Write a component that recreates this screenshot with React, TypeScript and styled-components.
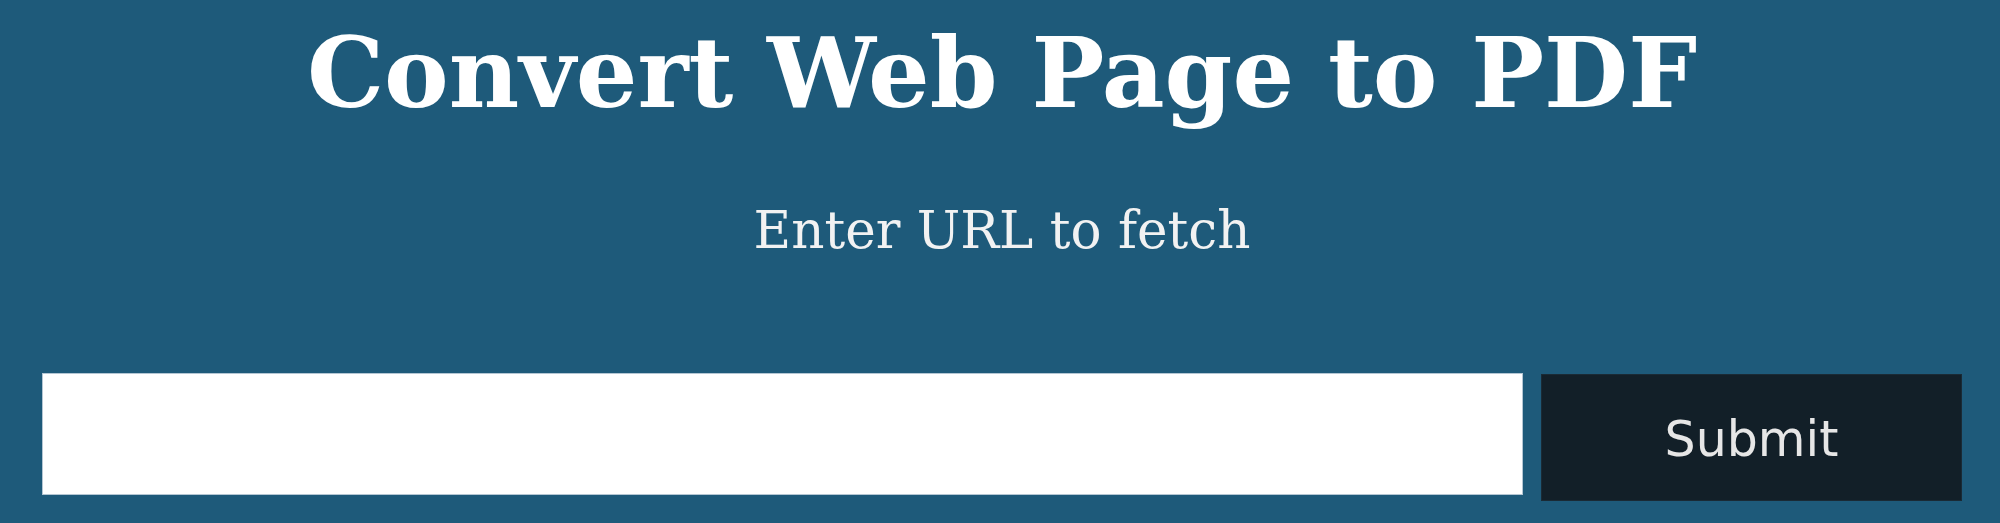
import React from "react";
import styled, { createGlobalStyle } from "styled-components";

const GlobalStyle = createGlobalStyle`
  html, body {
    margin: 0;
    padding: 0;
    background: #1e5a7a;
  }
  body {
    font-family: "DejaVu Serif", serif;
  }
`;

const Page = styled.main`
  display: flex;
  flex-direction: column;
  align-items: stretch;
  padding: 17px 38px 0 42px;
  min-height: 523px;
  box-sizing: border-box;
`;

const Title = styled.h1`
  margin: 0;
  text-align: center;
  font-family: "DejaVu Serif", serif;
  font-weight: bold;
  font-size: 97px;
  line-height: 113px;
  color: #ffffff;
`;

const Subtitle = styled.p`
  margin: 70px 0 0;
  text-align: center;
  font-family: "DejaVu Serif", serif;
  font-size: 51.6px;
  line-height: 60px;
  color: #f2f2f2;
`;

const Form = styled.form`
  display: flex;
  align-items: flex-start;
  gap: 18px;
  margin-top: 113px;
`;

const UrlInput = styled.input`
  flex: 1;
  height: 122px;
  box-sizing: border-box;
  border: 1px solid #b4c6d3;
  background: #ffffff;
  font-size: 40px;
  padding: 0 16px;
  outline: none;
`;

const SubmitButton = styled.button`
  width: 421px;
  height: 127px;
  margin-top: 1px;
  padding: 4px 0 0;
  box-sizing: border-box;
  border: 1px solid #1a2a35;
  background: #121f28;
  color: #e6e6e6;
  font-family: "DejaVu Sans", sans-serif;
  font-size: 49px;
  cursor: pointer;
`;

export default function App() {
  return (
    <>
      <GlobalStyle />
      <Page>
        <Title>Convert Web Page to PDF</Title>
        <Subtitle>Enter URL to fetch</Subtitle>
        <Form onSubmit={(e) => e.preventDefault()}>
          <UrlInput type="text" aria-label="URL" />
          <SubmitButton type="submit">Submit</SubmitButton>
        </Form>
      </Page>
    </>
  );
}
